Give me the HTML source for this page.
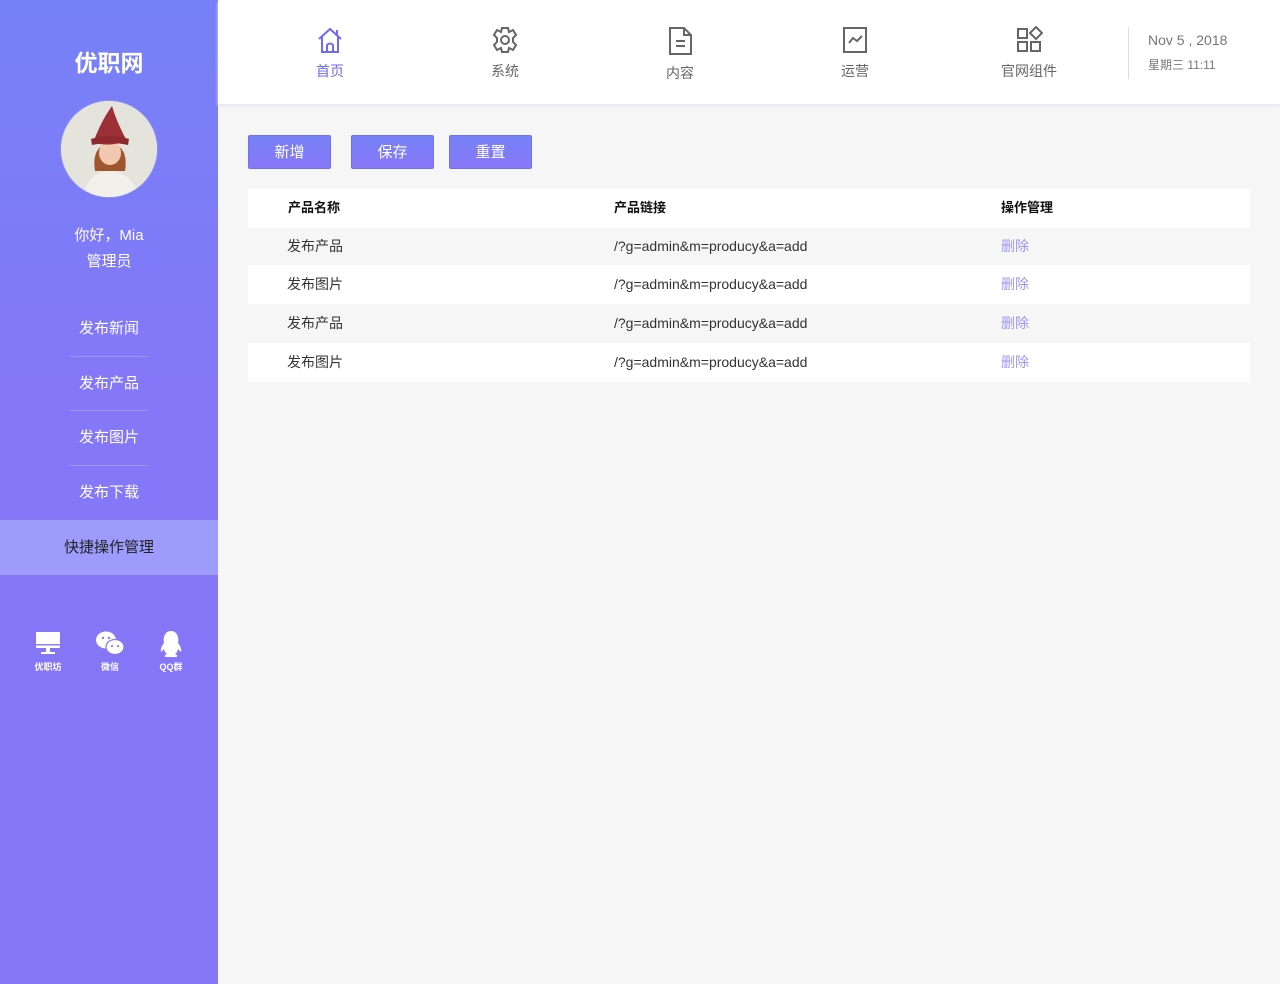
<!DOCTYPE html>
<html><head><meta charset="utf-8"><style>
*{margin:0;padding:0;box-sizing:border-box}
body{width:1280px;height:984px;background:#f6f6f6;font-family:"Liberation Sans","Noto Sans CJK SC",sans-serif;position:relative;overflow:hidden}
.side{position:absolute;left:0;top:0;width:218px;height:984px;background:linear-gradient(#7681f7,#8477f8 40%,#8676f8);color:#fff;text-align:center}
.logo{position:absolute;top:44px;width:218px;font-size:23px;font-weight:bold}
.av{position:absolute;left:60px;top:100px;width:98px;height:98px;border-radius:50%;background:#e3e2dc;overflow:hidden;border:1px solid #8a90f5}
.hi{position:absolute;top:223px;width:218px;font-size:15px;line-height:26px}
.menu{position:absolute;top:302px;width:218px}
.menu div{height:54.5px;line-height:54px;font-size:15px;margin:0 70px;border-bottom:1px solid rgba(255,255,255,.22)}
.menu div:last-child{border:none}
.act{position:absolute;top:520px;width:218px;height:55px;line-height:56px;background:#9d9cfd;color:#222;font-size:15px}
.ic{position:absolute;top:630px;width:40px;font-size:9px;font-weight:bold}
.top{position:absolute;left:218px;top:0;width:1062px;height:104px;background:#fff;box-shadow:0 2px 3px #e6e6f3}
.nav{position:absolute;top:26px;width:80px;text-align:center;font-size:14px;color:#666}
.nav svg{display:block;margin:0 auto 7px}
.date{position:absolute;left:910px;top:27px;height:52px;border-left:1px solid #ddd;padding-left:19px;color:#777}
.btn{position:absolute;top:135px;width:83px;height:34px;background:linear-gradient(#7681f7,#8777f8);border:1px solid #6e73f0;border-radius:2px;color:#fff;font-size:15px;text-align:center;line-height:33px}
.row{position:absolute;left:248px;width:1002px;height:39px;font-size:14px;color:#333;line-height:38px}
.row span{position:absolute}
.w{background:#fff}
.del{color:#9b97f5}
</style></head><body>
<div class="side">
<div class="logo">优职网</div>
<div class="av"><svg width="98" height="98" viewBox="0 0 98 98"><rect width="98" height="98" fill="#e4e3dc"/><path d="M22 98 Q25 72 49 70 Q73 72 78 98Z" fill="#f2f0ea"/><path d="M34 70 Q30 45 49 42 Q68 45 64 70Z" fill="#a0552e"/><ellipse cx="49" cy="52" rx="11" ry="12" fill="#f1c9b0"/><path d="M32 42 Q40 20 51 5 Q56 22 66 40 Q49 46 32 42Z" fill="#9c3036"/><path d="M30 38 Q49 32 68 38 L67 44 Q49 40 31 44Z" fill="#8c2a30"/></svg></div>
<div class="hi">你好，Mia<br>管理员</div>
<div class="menu"><div>发布新闻</div><div>发布产品</div><div>发布图片</div><div>发布下载</div></div>
<div class="act">快捷操作管理</div>
<div class="ic" style="left:28px"><svg width="26" height="28" viewBox="0 0 26 28"><rect x="1" y="2" width="24" height="16" rx="1" fill="#fff"/><rect x="1" y="14" width="24" height="1.5" fill="#8a80f8"/><rect x="11" y="18" width="4" height="4" fill="#fff"/><rect x="6" y="22" width="14" height="2" fill="#fff"/></svg><br>优职坊</div>
<div class="ic" style="left:90px"><svg width="30" height="28" viewBox="0 0 30 28"><ellipse cx="11" cy="10" rx="10" ry="8.5" fill="#fff"/><ellipse cx="20" cy="17" rx="9" ry="7.5" fill="#fff" stroke="#8479f8" stroke-width="1.2"/><circle cx="8" cy="8" r="1.2" fill="#8479f8"/><circle cx="14" cy="8" r="1.2" fill="#8479f8"/><circle cx="17" cy="16" r="1.1" fill="#8479f8"/><circle cx="23" cy="16" r="1.1" fill="#8479f8"/></svg><br>微信</div>
<div class="ic" style="left:151px"><svg width="26" height="28" viewBox="0 0 26 28"><path d="M13 1 C6 1 5 9 6 13 Q2 18 3 22 Q5 20 6 19 Q7 23 9 24 Q5 26 8 27 L18 27 Q21 26 17 24 Q19 23 20 19 Q21 20 23 22 Q24 18 20 13 C21 9 20 1 13 1Z" fill="#fff"/></svg><br>QQ群</div>
</div>
<div class="top">
<div class="nav" style="left:72px;color:#6f69f5"><svg width="28" height="28" viewBox="0 0 28 28" fill="none" stroke="#6f69f5" stroke-width="2"><path d="M3 13 L14 3 L25 13 M6 11 V26 H22 V11 M11 26 V19 Q14 16 17 19 V26 M21 4 V9"/></svg>首页</div>
<div class="nav" style="left:247px"><svg width="28" height="28" viewBox="0 0 28 28" fill="none" stroke="#666" stroke-width="2"><path d="M11 2 H17 L18 6 L22 4 L25 9 L22 12 V16 L25 19 L22 24 L18 22 L17 26 H11 L10 22 L6 24 L3 19 L6 16 V12 L3 9 L6 4 L10 6Z"/><circle cx="14" cy="14" r="4"/></svg>系统</div>
<div class="nav" style="left:422px"><svg width="28" height="30" viewBox="0 0 28 30" fill="none" stroke="#666" stroke-width="2"><path d="M4 2 H18 L25 9 V28 H4Z M18 2 V9 H25 M10 15 H19 M10 20 H19"/></svg>内容</div>
<div class="nav" style="left:597px"><svg width="28" height="28" viewBox="0 0 28 28" fill="none" stroke="#666" stroke-width="2"><rect x="3" y="2" width="22" height="24"/><path d="M8 17 L12 12 L16 15 L21 10"/></svg>运营</div>
<div class="nav" style="left:770px;width:82px"><svg width="28" height="28" viewBox="0 0 28 28" fill="none" stroke="#666" stroke-width="2"><rect x="3" y="3" width="9" height="9"/><path d="M21 1 L27 7 L21 13 L15 7Z"/><rect x="3" y="16" width="9" height="9"/><rect x="16" y="16" width="9" height="9"/></svg>官网组件</div>
<div class="date"><div style="font-size:14px;margin-top:5px">Nov 5 , 2018</div><div style="font-size:12px;margin-top:8px">星期三 11:11</div></div>
</div>
<div class="btn" style="left:248px">新增</div>
<div class="btn" style="left:351px">保存</div>
<div class="btn" style="left:449px">重置</div>
<div class="row w" style="top:189px;font-weight:bold;color:#111;font-size:13px"><span style="left:40px">产品名称</span><span style="left:366px">产品链接</span><span style="left:753px">操作管理</span></div>
<div class="row" style="top:227px"><span style="left:39px">发布产品</span><span style="left:366px">/?g=admin&amp;m=producy&amp;a=add</span><span class="del" style="left:753px">删除</span></div>
<div class="row w" style="top:265px"><span style="left:39px">发布图片</span><span style="left:366px">/?g=admin&amp;m=producy&amp;a=add</span><span class="del" style="left:753px">删除</span></div>
<div class="row" style="top:304px"><span style="left:39px">发布产品</span><span style="left:366px">/?g=admin&amp;m=producy&amp;a=add</span><span class="del" style="left:753px">删除</span></div>
<div class="row w" style="top:343px"><span style="left:39px">发布图片</span><span style="left:366px">/?g=admin&amp;m=producy&amp;a=add</span><span class="del" style="left:753px">删除</span></div>
</body></html>
